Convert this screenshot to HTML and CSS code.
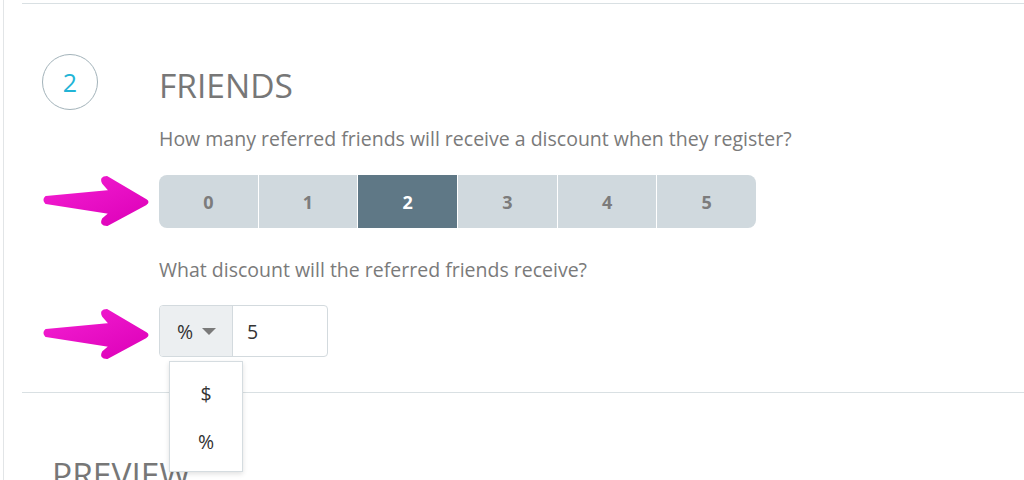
FILE: index.html
```html
<!DOCTYPE html>
<html>
<head>
<meta charset="utf-8">
<link rel="stylesheet" href="styles.css">
</head>
<body>
<div class="page">
  <div class="section">
    <div class="step">
      <div class="step-num">2</div>
      <div class="step-body">
        <h2 class="title">FRIENDS</h2>
        <p class="question">How many referred friends will receive a discount when they register?</p>
        <div class="segmented">
          <button class="seg">0</button>
          <button class="seg">1</button>
          <button class="seg active">2</button>
          <button class="seg">3</button>
          <button class="seg">4</button>
          <button class="seg">5</button>
        </div>
        <p class="question q2">What discount will the referred friends receive?</p>
        <div class="input-wrap">
          <div class="input-group">
            <div class="addon">
              <span class="addon-val">%</span>
              <span class="caret"></span>
            </div>
            <div class="value">5</div>
          </div>
          <ul class="dropdown">
            <li>$</li>
            <li>%</li>
          </ul>
        </div>
      </div>
    </div>
  </div>
  <div class="section preview">
    <h2 class="title">PREVIEW</h2>
  </div>

  <svg class="arrow arrow-1" viewBox="0 0 110 56" width="110" height="56">
    <defs>
      <linearGradient id="ag" x1="0" y1="0" x2="1" y2="1">
        <stop offset="0" stop-color="#f41fd2"/>
        <stop offset="1" stop-color="#dc00b8"/>
      </linearGradient>
    </defs>
    <path d="M4,25 L68,19 L61,11 Q58,5 65,5 L104,28 Q107,30 104,32 L65,53 Q58,53 61,47 L68,41 L4,31 Q1,28 4,25 Z" fill="url(#ag)" stroke="url(#ag)" stroke-width="2" stroke-linejoin="round"/>
  </svg>
  <svg class="arrow arrow-2" viewBox="0 0 110 56" width="110" height="56">
    <path d="M4,25 L68,19 L61,11 Q58,5 65,5 L104,28 Q107,30 104,32 L65,53 Q58,53 61,47 L68,41 L4,31 Q1,28 4,25 Z" fill="url(#ag)" stroke="url(#ag)" stroke-width="2" stroke-linejoin="round"/>
  </svg>
</div>
</body>
</html>
```

FILE: styles.css
```css
* { box-sizing: border-box; }
html, body { margin: 0; padding: 0; background: #fff; }
body {
  font-family: "Open Sans", "Liberation Sans", sans-serif;
  color: #7a7a7a;
  width: 1024px;
  height: 480px;
  overflow: hidden;
}
.page {
  position: relative;
  margin-left: 3px;
  height: 480px;
  border-left: 1px solid #e2e5e7;
  padding-top: 3px;
}
.section {
  margin-left: 18px;
  border-top: 1px solid #d9e0e3;
}
.step {
  display: grid;
  grid-template-columns: 117px 1fr;
  padding-left: 20px;
  padding-bottom: 35px;
}
.step-num {
  margin-top: 50px;
  width: 56px;
  height: 56px;
  border: 1px solid #a3b3ba;
  border-radius: 50%;
  color: #22b4d6;
  font-size: 25px;
  display: flex;
  align-items: center;
  justify-content: center;
}
.title {
  margin: 61px 0 0;
  font-size: 33.5px;
  line-height: 40px;
  font-weight: 400;
  color: #777;
}
.question {
  margin: 22px 0 0;
  font-size: 19.5px;
  line-height: 24px;
  color: #7a7a7a;
}
.q2 { margin-top: 30px; }
.segmented {
  margin-top: 24px;
  width: 597px;
  height: 53px;
  display: flex;
  gap: 1px;
  border-radius: 8px;
  overflow: hidden;
}
.seg {
  flex: 1;
  border: 0;
  padding: 0;
  background: #d0d9de;
  color: #7c7c7c;
  font-family: inherit;
  font-weight: 700;
  font-size: 18px;
}
.seg.active {
  background: #5f7886;
  color: #fff;
}
.input-wrap {
  position: relative;
  margin-top: 23px;
  width: 169px;
}
.input-group {
  display: flex;
  height: 52px;
  border: 1px solid #d3dade;
  border-radius: 4px;
  overflow: hidden;
}
.addon {
  width: 73px;
  background: #eceff1;
  border-right: 1px solid #d3dade;
  display: flex;
  align-items: center;
  padding-left: 17px;
  gap: 9px;
  color: #333;
  font-size: 19.5px;
}
.caret {
  width: 0;
  height: 0;
  border-left: 7px solid transparent;
  border-right: 7px solid transparent;
  border-top: 7px solid #7a7a7a;
}
.value {
  flex: 1;
  display: flex;
  align-items: center;
  padding-left: 14px;
  color: #333;
  font-size: 19.5px;
}
.dropdown {
  position: absolute;
  left: 10px;
  top: 56px;
  width: 74px;
  height: 111px;
  margin: 0;
  padding: 7px 0 0;
  list-style: none;
  background: #fff;
  border: 1px solid #d5dce0;
  box-shadow: 0 2px 5px rgba(0, 0, 0, 0.12);
  z-index: 2;
}
.dropdown li {
  height: 48px;
  display: flex;
  align-items: center;
  justify-content: center;
  color: #333;
  font-size: 19.5px;
}
.preview {
  padding-left: 30px;
}
.preview .title {
  margin-top: 61px;
}
.arrow {
  position: absolute;
  z-index: 3;
}
.arrow-1 { left: 38px; top: 172px; }
.arrow-2 { left: 38px; top: 305px; }
```
